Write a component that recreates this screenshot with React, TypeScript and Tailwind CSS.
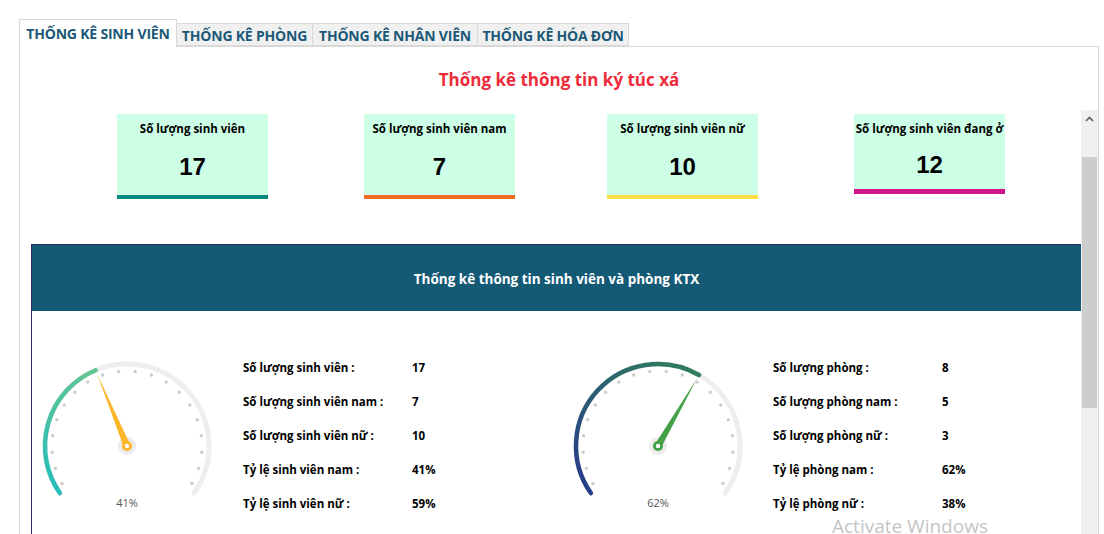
import React from 'react';

const FONT = { fontFamily: '"Open Sans", "Noto Sans", sans-serif' };

type Stat = { title: string; value: string; bar: string; short?: boolean };

const stats: Stat[] = [
  { title: 'Số lượng sinh viên', value: '17', bar: 'bg-[#00897b]' },
  { title: 'Số lượng sinh viên nam', value: '7', bar: 'bg-[#f26b25]' },
  { title: 'Số lượng sinh viên nữ', value: '10', bar: 'bg-[#fddf45]' },
  { title: 'Số lượng sinh viên đang ở', value: '12', bar: 'bg-[#d0138a]', short: true },
];

const tabs = [
  { label: 'THỐNG KÊ SINH VIÊN', w: 'w-[158px]' },
  { label: 'THỐNG KÊ PHÒNG', w: 'w-[136px]' },
  { label: 'THỐNG KÊ NHÂN VIÊN', w: 'w-[165px]' },
  { label: 'THỐNG KÊ HÓA ĐƠN', w: 'w-[151px]' },
];

function pt(cx: number, cy: number, r: number, deg: number) {
  const a = (deg * Math.PI) / 180;
  return [cx + r * Math.cos(a), cy - r * Math.sin(a)];
}

function Gauge({ id, pct, from, to, needle }: { id: string; pct: number; from: string; to: string; needle: string }) {
  const cx = 90;
  const cy = 90;
  const r = 82;
  const start = 215;
  const endAll = -35;
  const valDeg = start - 250 * pct;
  const [sx, sy] = pt(cx, cy, r, start);
  const [ex, ey] = pt(cx, cy, r, endAll);
  const [vx, vy] = pt(cx, cy, r, valDeg);
  const dots = Array.from({ length: 20 }, (_, i) => pt(cx, cy, 75, 210 - (i * 240) / 19));
  const [tx, ty] = pt(cx, cy, 78, valDeg);
  const [b1x, b1y] = pt(cx, cy, 3.5, valDeg + 90);
  const [b2x, b2y] = pt(cx, cy, 3.5, valDeg - 90);
  return (
    <svg width="180" height="160" viewBox="0 0 180 160" className="shrink-0">
      <defs>
        <linearGradient id={id} gradientUnits="userSpaceOnUse" x1={sx} y1={sy} x2={vx} y2={vy}>
          <stop offset="0" stopColor={from} />
          <stop offset="1" stopColor={to} />
        </linearGradient>
      </defs>
      <path d={`M ${sx} ${sy} A ${r} ${r} 0 1 1 ${ex} ${ey}`} fill="none" stroke="#eeeeee" strokeWidth="5" strokeLinecap="round" />
      <path d={`M ${sx} ${sy} A ${r} ${r} 0 0 1 ${vx} ${vy}`} fill="none" stroke={`url(#${id})`} strokeWidth="4.5" strokeLinecap="round" />
      {dots.map(([x, y], i) => (
        <circle key={i} cx={x} cy={y} r="1.7" fill="#cccccc" />
      ))}
      <circle cx={cx} cy={cy} r="9" fill="#ececec" />
      <polygon points={`${b1x},${b1y} ${tx},${ty} ${b2x},${b2y}`} fill={needle} />
      <circle cx={cx} cy={cy} r="5" fill={needle} />
      <circle cx={cx} cy={cy} r="2.2" fill="#ffffff" />
      <text x={cx} y={cy + 61} textAnchor="middle" fontSize="11" fill="#555555" style={FONT}>
        {Math.round(pct * 100)}%
      </text>
    </svg>
  );
}

function InfoTable({ rows }: { rows: [string, string][] }) {
  return (
    <div className="w-[300px] shrink-0">
      {rows.map(([k, v]) => (
        <div key={k} className="flex h-[34px] items-center text-[11.5px] font-bold text-black">
          <div className="w-[169px]">{k}</div>
          <div>{v}</div>
        </div>
      ))}
    </div>
  );
}

export default function App() {
  return (
    <div className="relative h-[534px] w-[1104px] overflow-hidden bg-white" style={FONT}>
      {/* tabs */}
      <div className="flex items-end pl-[19px] pt-[19px]">
        {tabs.map((t, i) => (
          <div
            key={t.label}
            className={
              i === 0
                ? `relative z-10 -mb-px flex h-[28px] ${t.w} items-center justify-center whitespace-nowrap border border-b-0 border-[#d9d9d9] bg-white text-[14px] font-bold tracking-[-0.2px] text-[#1b5877]`
                : `flex h-[23px] ${t.w} items-center justify-center whitespace-nowrap border border-l-0 border-[#d9d9d9] bg-[#f0f0f0] pt-[2px] text-[14px] font-bold tracking-[-0.2px] text-[#1b5877]`
            }
          >
            {t.label}
          </div>
        ))}
      </div>

      {/* tab page */}
      <div className="ml-[19px] mr-[5px] h-[488px] border border-b-0 border-[#d9d9d9]">
        <div className="flex h-[63px] items-center justify-center">
          <h1 className="mt-[2px] text-[17px] font-bold text-[#ed2b3a]">Thống kê thông tin ký túc xá</h1>
        </div>

        <div className="flex h-[424px]">
          <div className="flex-1 overflow-hidden">
            {/* cards */}
            <div className="flex items-start pl-[97px] pt-[4px]">
              {stats.map((s, i) => (
                <div
                  key={s.title}
                  className={`w-[151px] shrink-0 ${i === 1 ? 'ml-[96px]' : ''} ${i === 2 ? 'ml-[92px]' : ''} ${i === 3 ? 'ml-[96px]' : ''}`}
                >
                  <div className={`flex flex-col items-center bg-[#ccffe6] ${s.short ? 'h-[75px]' : 'h-[81px]'}`}>
                    <div className="mt-[6px] whitespace-nowrap text-[11.5px] font-bold text-black">{s.title}</div>
                    <div
                      className={`${s.short ? 'mt-[16px]' : 'mt-[18px]'} text-[24px] font-bold leading-none text-black`}
                      style={{ fontFamily: '"Liberation Sans", Arial, sans-serif' }}
                    >
                      {s.value}
                    </div>
                  </div>
                  <div className={`${s.short ? 'h-[5px]' : 'h-[4px]'} ${s.bar}`} />
                </div>
              ))}
            </div>

            {/* stats panel */}
            <div className="ml-[11px] mt-[45px] border-l border-t border-[#2a2a6a]">
              <div className="flex h-[66px] items-center justify-center bg-[#155a75] pt-[3px] text-[13.5px] font-bold text-white">
                Thống kê thông tin sinh viên và phòng KTX
              </div>
              <div className="flex h-[260px] items-start pt-[40px]">
                <div className="ml-[5px] mt-[5px]">
                  <Gauge id="g1" pct={0.41} from="#24bdbb" to="#64c493" needle="#fbb62a" />
                </div>
                <div className="ml-[26px]">
                  <InfoTable
                    rows={[
                      ['Số lượng sinh viên :', '17'],
                      ['Số lượng sinh viên nam :', '7'],
                      ['Số lượng sinh viên nữ :', '10'],
                      ['Tỷ lệ sinh viên nam :', '41%'],
                      ['Tỷ lệ sinh viên nữ :', '59%'],
                    ]}
                  />
                </div>
                <div className="ml-[25px] mt-[5px]">
                  <Gauge id="g2" pct={0.62} from="#263e88" to="#2f7e5b" needle="#43a047" />
                </div>
                <div className="ml-[25px]">
                  <InfoTable
                    rows={[
                      ['Số lượng phòng :', '8'],
                      ['Số lượng phòng nam :', '5'],
                      ['Số lượng phòng nữ :', '3'],
                      ['Tỷ lệ phòng nam :', '62%'],
                      ['Tỷ lệ phòng nữ :', '38%'],
                    ]}
                  />
                </div>
              </div>
            </div>
          </div>

          {/* scrollbar */}
          <div className="flex w-[17px] shrink-0 flex-col bg-[#f0f0f0]">
            <div className="flex h-[18px] items-center justify-center">
              <svg width="9" height="6" viewBox="0 0 9 6">
                <path d="M1 5 L4.5 1.5 L8 5" fill="none" stroke="#606060" strokeWidth="1.6" />
              </svg>
            </div>
            <div className="mx-[1px] mt-[29px] h-[251px] bg-[#cdcdcd]" />
          </div>
        </div>
      </div>

      <div className="absolute left-[832px] top-[516px] text-[19px] leading-[20px] text-[#c4c4c4]">Activate Windows</div>
    </div>
  );
}
